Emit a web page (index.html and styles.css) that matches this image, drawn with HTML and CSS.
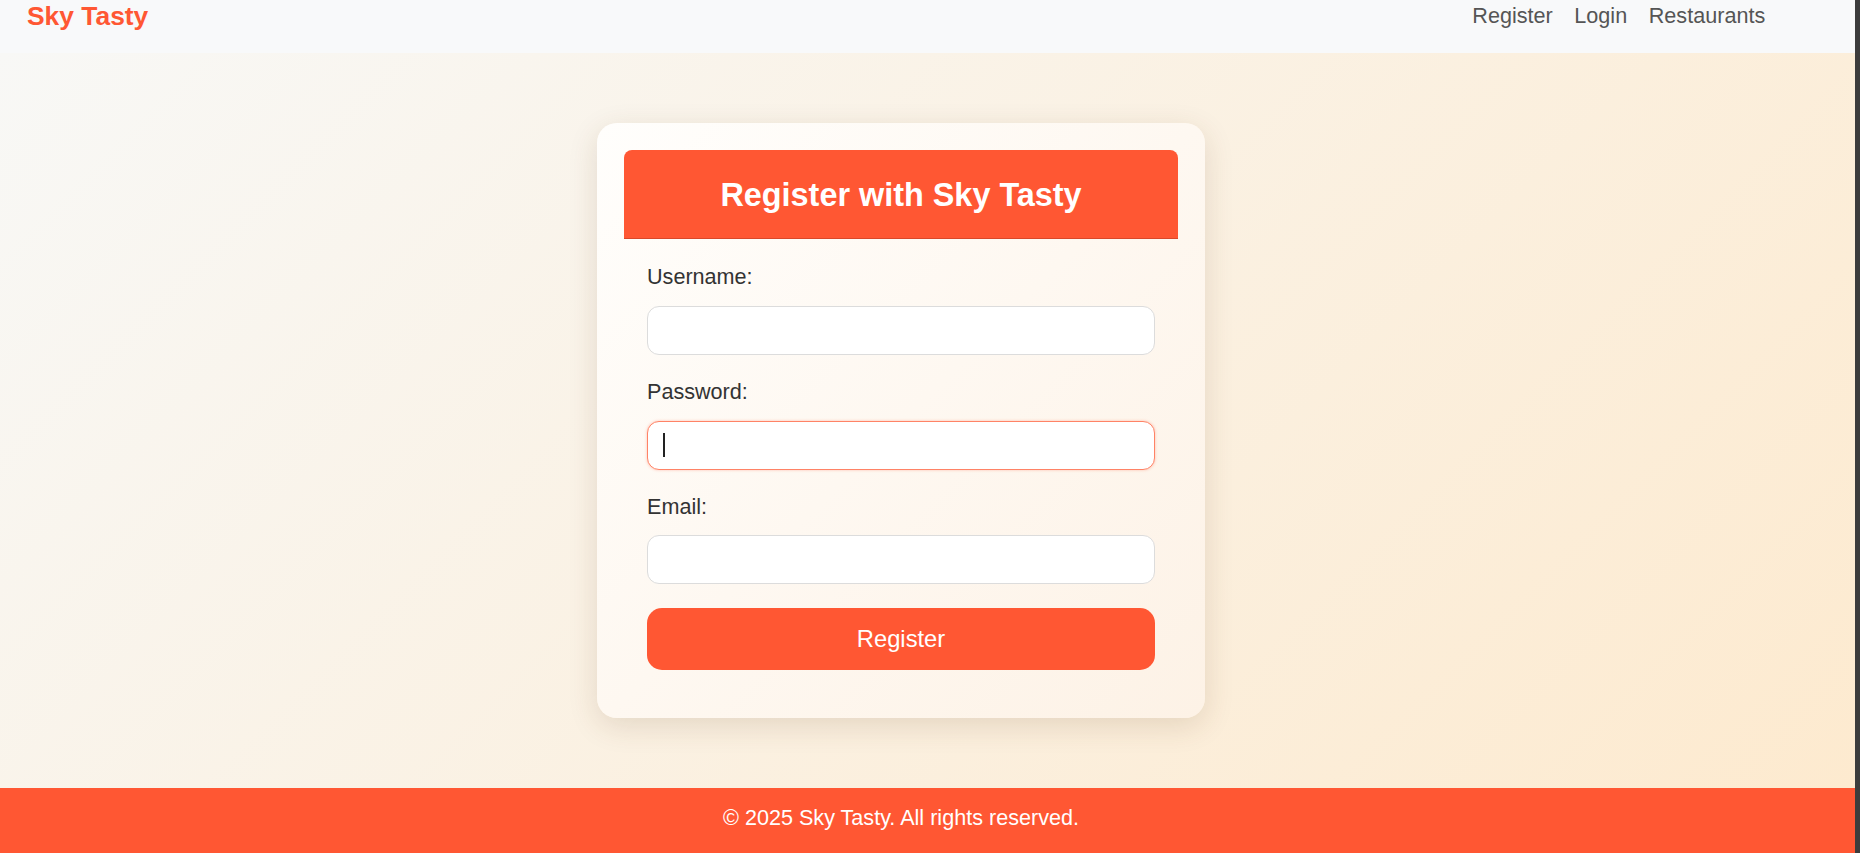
FILE: index.html
```html
<!DOCTYPE html>
<html lang="en">
<head>
<meta charset="utf-8">
<title>Register - Sky Tasty</title>
<link rel="stylesheet" href="styles.css">
</head>
<body>
<div class="page">
  <header class="navbar">
    <a class="logo" href="#">Sky Tasty</a>
    <nav class="nav-links">
      <a href="#">Register</a>
      <a href="#">Login</a>
      <a href="#">Restaurants</a>
    </nav>
  </header>
  <main class="main">
    <section class="card">
      <div class="card-header">
        <h1>Register with Sky Tasty</h1>
      </div>
      <form class="form">
        <label class="label" for="username">Username:</label>
        <input class="input" id="username" type="text">
        <label class="label" for="password">Password:</label>
        <div class="input-wrap">
          <input class="input input-focus" id="password" type="password">
          <span class="caret"></span>
        </div>
        <label class="label" for="email">Email:</label>
        <input class="input input-last" id="email" type="email">
        <button class="btn" type="button">Register</button>
      </form>
    </section>
  </main>
  <footer class="footer">© 2025 Sky Tasty. All rights reserved.</footer>
</div>
</body>
</html>
```

FILE: styles.css
```css
html {
  background: #3c3c3c;
}
body {
  margin: 0;
  font-family: "Liberation Sans", Arial, sans-serif;
  font-size: 21.6px;
  color: #333;
}
.page {
  width: 1855px;
  height: 853px;
  display: flex;
  flex-direction: column;
}
.navbar {
  height: 53px;
  flex: none;
  box-sizing: border-box;
  background: #f8f9fa;
  display: flex;
  justify-content: space-between;
  align-items: flex-start;
  padding: 0 79px 0 27px;
}
.logo {
  font-size: 26.4px;
  font-weight: bold;
  color: #ff5733;
  text-decoration: none;
  padding-top: 1px;
}
.nav-links {
  display: flex;
  margin-top: 3px;
}
.nav-links a {
  color: #555;
  text-decoration: none;
  padding: 0 10.8px;
}
.main {
  flex: 1;
  display: flex;
  align-items: center;
  justify-content: center;
  padding-right: 53px;
  background: linear-gradient(135deg, #f8f8f6 0%, #fdeacf 100%);
}
.card {
  width: 608px;
  box-sizing: border-box;
  padding: 27px;
  border-radius: 20px;
  background: linear-gradient(135deg, #fffefc 0%, #fdf2e6 100%);
  box-shadow: 0 8px 30px rgba(90, 60, 20, 0.14);
}
.card-header {
  height: 89px;
  box-sizing: border-box;
  background: #ff5733;
  border-radius: 8px 8px 0 0;
  border-bottom: 1px solid #d9482a;
  padding: 27px 10px 0;
  text-align: center;
}
.card-header h1 {
  margin: 0;
  font-size: 32.4px;
  font-weight: bold;
  color: #fff;
  line-height: 37px;
}
.form {
  display: flex;
  flex-direction: column;
  padding: 26px 23px 21.3px;
}
.label {
  display: block;
  color: #333;
  margin-bottom: 16px;
  line-height: 24.8px;
}
.input {
  display: block;
  width: 100%;
  height: 49px;
  box-sizing: border-box;
  border: 1px solid #dcdcdc;
  border-radius: 12px;
  background: #fff;
  padding: 0 15px;
  font-family: inherit;
  font-size: 21.6px;
  margin: 0 0 25px;
  outline: none;
}
.input-wrap {
  position: relative;
}
.input-focus {
  border-color: #ff8366;
  box-shadow: 0 0 3px rgba(255, 87, 51, 0.35);
}
.caret {
  position: absolute;
  left: 16px;
  top: 12px;
  width: 2px;
  height: 24px;
  background: #222;
}
.input-last {
  margin-bottom: 23.5px;
}
.btn {
  display: block;
  width: 100%;
  height: 62px;
  border: none;
  border-radius: 15px;
  background: #ff5733;
  color: #fff;
  font-family: inherit;
  font-size: 23.76px;
  cursor: pointer;
}
.footer {
  height: 65px;
  flex: none;
  box-sizing: border-box;
  background: #ff5733;
  color: #fff;
  text-align: center;
  padding: 17px 53px 0 0;
}
```
